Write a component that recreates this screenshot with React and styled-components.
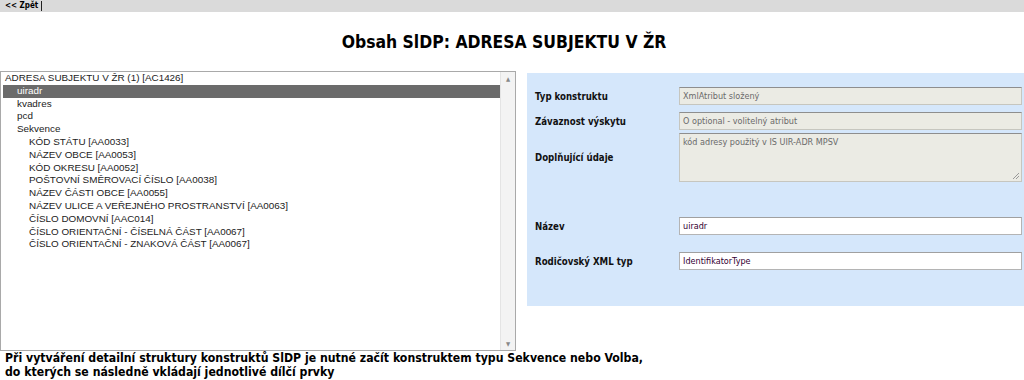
import React from 'react';
import styled, { createGlobalStyle } from 'styled-components';

const GlobalStyle = createGlobalStyle`
  html, body {
    margin: 0;
    padding: 0;
    background: #ffffff;
  }
  body {
    font-family: 'DejaVu Sans Condensed', 'DejaVu Sans', sans-serif;
    color: #000;
  }
`;

const TopBar = styled.div`
  height: 12px;
  background: #dadada;
  display: flex;
  align-items: center;
  padding-left: 5px;
`;

const BackLink = styled.a`
  font-family: 'DejaVu Sans Condensed', 'DejaVu Sans', sans-serif;
  font-weight: bold;
  font-size: 8px;
  color: #000;
  text-decoration: none;
  padding-right: 3px;
  border-right: 1px solid #222;
  line-height: 10px;
`;

const Title = styled.h1`
  margin: 0;
  height: 58px;
  display: flex;
  align-items: center;
  justify-content: center;
  font-family: 'DejaVu Sans Condensed', 'DejaVu Sans', sans-serif;
  font-weight: bold;
  font-size: 17.4px;
  padding: 1px 16px 0 0;
`;

const Main = styled.div`
  display: flex;
  gap: 11px;
  align-items: flex-start;
`;

const LeftCol = styled.div`
  width: 516px;
  flex-shrink: 0;
`;

const ListBox = styled.div`
  height: 280px;
  box-sizing: border-box;
  border: 1px solid #a9a9a9;
  display: flex;
  background: #fff;
`;

const ListItems = styled.div`
  flex: 1;
  padding: 0 0 0 2px;
  font-family: 'Liberation Sans', Arial, sans-serif;
  font-size: 9.9px;
  color: #222;
`;

const Item = styled.div`
  height: 12.8px;
  line-height: 12.8px;
  padding-left: ${(p) => 2 + p.$level * 12}px;
  white-space: nowrap;
  background: ${(p) => (p.$selected ? '#6b6b6b' : 'transparent')};
  color: ${(p) => (p.$selected ? '#fff' : '#222')};
`;

const ScrollTrack = styled.div`
  width: 15px;
  background: #f3f3f3;
  border-left: 1px solid #e4e4e4;
  display: flex;
  flex-direction: column;
  justify-content: space-between;
  align-items: center;
  font-size: 6px;
  color: #888;
  padding: 3px 0;
  box-sizing: border-box;
`;

const Hint = styled.p`
  margin: 0;
  padding-left: 5px;
  font-family: 'DejaVu Sans Condensed', 'DejaVu Sans', sans-serif;
  font-weight: bold;
  font-size: 12.2px;
  line-height: 14px;
  white-space: nowrap;
`;

const Panel = styled.div`
  flex: 1;
  margin-top: 2px;
  background: #d5e7fb;
  padding: 14px 2px 36px 8px;
  display: flex;
  flex-direction: column;
`;

const Row = styled.div`
  display: grid;
  grid-template-columns: 144px 1fr;
  align-items: center;
  margin-top: ${(p) => p.$mt || 0}px;
`;

const Label = styled.label`
  font-family: 'DejaVu Sans Condensed', 'DejaVu Sans', sans-serif;
  font-weight: bold;
  font-size: 9.6px;
  color: #111;
`;

const Field = styled.div`
  box-sizing: border-box;
  height: ${(p) => p.$h || 18}px;
  border: 1px solid ${(p) => (p.$disabled ? '#c6c6bf' : '#b4b4b4')};
  border-top: 1px solid ${(p) => (p.$disabled ? '#8e8e8e' : '#a0a0a0')};
  background: ${(p) => (p.$disabled ? '#ebebe4' : '#ffffff')};
  color: ${(p) => (p.$disabled ? '#6a6a6a' : '#330033')};
  font-family: 'DejaVu Sans Condensed', 'DejaVu Sans', sans-serif;
  font-size: 9px;
  padding: ${(p) => (p.$multi ? '2px 3px' : '0 3px')};
  line-height: ${(p) => (p.$multi ? '13px' : '16px')};
  position: relative;
  white-space: nowrap;
`;

const Grip = styled.svg`
  position: absolute;
  right: 1px;
  bottom: 1px;
`;

const items = [
  { t: 'ADRESA SUBJEKTU V ŽR (1) [AC1426]', l: 0 },
  { t: 'uiradr', l: 1, sel: true },
  { t: 'kvadres', l: 1 },
  { t: 'pcd', l: 1 },
  { t: 'Sekvence', l: 1 },
  { t: 'KÓD STÁTU [AA0033]', l: 2 },
  { t: 'NÁZEV OBCE [AA0053]', l: 2 },
  { t: 'KÓD OKRESU [AA0052]', l: 2 },
  { t: 'POŠTOVNÍ SMĚROVACÍ ČÍSLO [AA0038]', l: 2 },
  { t: 'NÁZEV ČÁSTI OBCE [AA0055]', l: 2 },
  { t: 'NÁZEV ULICE A VEŘEJNÉHO PROSTRANSTVÍ [AA0063]', l: 2 },
  { t: 'ČÍSLO DOMOVNÍ [AAC014]', l: 2 },
  { t: 'ČÍSLO ORIENTAČNÍ - ČÍSELNÁ ČÁST [AA0067]', l: 2 },
  { t: 'ČÍSLO ORIENTAČNÍ - ZNAKOVÁ ČÁST [AA0067]', l: 2 },
];

export default function App() {
  return (
    <>
      <GlobalStyle />
      <TopBar>
        <BackLink href="#">&lt;&lt; Zpět</BackLink>
      </TopBar>
      <Title>Obsah SlDP: ADRESA SUBJEKTU V ŽR</Title>
      <Main>
        <LeftCol>
          <ListBox>
            <ListItems>
              {items.map((it) => (
                <Item key={it.t} $level={it.l} $selected={it.sel}>
                  {it.t}
                </Item>
              ))}
            </ListItems>
            <ScrollTrack>
              <span>▲</span>
              <span>▼</span>
            </ScrollTrack>
          </ListBox>
          <Hint>
            Při vytváření detailní struktury konstruktů SlDP je nutné začít konstruktem typu Sekvence nebo Volba,
            <br />
            do kterých se následně vkládají jednotlivé dílčí prvky
          </Hint>
        </LeftCol>
        <Panel>
          <Row>
            <Label>Typ konstruktu</Label>
            <Field $disabled>XmlAtribut složený</Field>
          </Row>
          <Row $mt={7}>
            <Label>Závaznost výskytu</Label>
            <Field $disabled>O optional - volitelný atribut</Field>
          </Row>
          <Row $mt={3}>
            <Label>Doplňující údaje</Label>
            <Field $disabled $multi $h={49}>
              kód adresy použitý v IS UIR-ADR MPSV
              <Grip width="8" height="8" viewBox="0 0 8 8">
                <path d="M7 1 L1 7 M7 4 L4 7" stroke="#999" strokeWidth="1" />
              </Grip>
            </Field>
          </Row>
          <Row $mt={35}>
            <Label>Název</Label>
            <Field>uiradr</Field>
          </Row>
          <Row $mt={17}>
            <Label>Rodičovský XML typ</Label>
            <Field>IdentifikatorType</Field>
          </Row>
        </Panel>
      </Main>
    </>
  );
}
